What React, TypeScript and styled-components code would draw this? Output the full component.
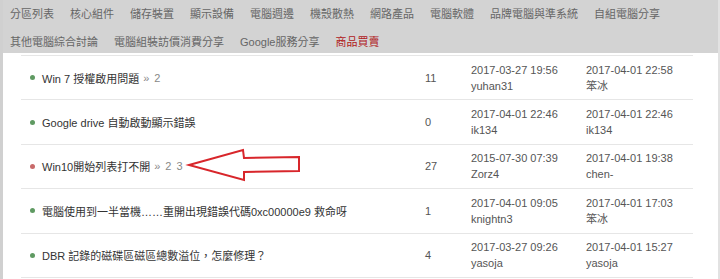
import React from 'react';
import styled, {createGlobalStyle} from 'styled-components';

const GlobalStyle = createGlobalStyle`
  html, body {
    margin: 0;
    padding: 0;
    background: #ffffff;
  }
  body {
    font-family: "Liberation Sans", "Noto Sans CJK TC", sans-serif;
    font-size: 11px;
  }
`;

const Page = styled.div`
  width: 720px;
  height: 279px;
  box-sizing: border-box;
  border-left: 3px solid #d0d0d0;
  border-right: 2px solid #e2e2e2;
  position: relative;
  overflow: hidden;
`;

const Nav = styled.nav`
  background: #d3d3d3;
  height: 53px;
  box-sizing: border-box;
  padding: 4px 0 0 7px;
  display: flex;
  flex-wrap: wrap;
  column-gap: 16px;
  row-gap: 8px;
  align-content: flex-start;
`;

const NavLink = styled.a<{$hot?: boolean}>`
  line-height: 20px;
  font-size: 11px;
  color: ${(p) => (p.$hot ? '#b0201c' : '#666666')};
  text-decoration: none;
  white-space: nowrap;
`;

const Table = styled.div`
  margin: 2px 0 0 18px;
  width: 672px;
`;

const Row = styled.div`
  display: grid;
  grid-template-columns: 404px 46px 115px 107px;
  align-items: center;
  height: 44.4px;
  box-sizing: border-box;
  border-top: 1px solid #e6e6e6;
  color: #444444;
`;

const Title = styled.div`
  display: flex;
  align-items: center;
  padding-left: 9px;
  color: #333333;
  white-space: nowrap;
`;

const Dot = styled.span<{$hot?: boolean}>`
  width: 5px;
  height: 5px;
  border-radius: 50%;
  background: ${(p) => (p.$hot ? '#c86a6a' : '#5f9a62')};
  margin-right: 7px;
  flex: none;
`;

const Pages = styled.span`
  color: #888888;
  margin-left: 4px;
  word-spacing: 2px;
`;

const Count = styled.div`
  color: #555555;
`;

const Stamp = styled.div`
  color: #555555;
  line-height: 16px;
`;

const Arrow = styled.svg`
  position: absolute;
  left: 180px;
  top: 145px;
`;

const sections = [
  '分區列表',
  '核心組件',
  '儲存裝置',
  '顯示設備',
  '電腦週邊',
  '機殼散熱',
  '網路產品',
  '電腦軟體',
  '品牌電腦與準系統',
  '自組電腦分享',
  '其他電腦綜合討論',
  '電腦組裝訪價消費分享',
  'Google服務分享',
];

type Topic = {
  title: string;
  pages?: string;
  hot?: boolean;
  replies: string;
  start: [string, string];
  last: [string, string];
};

const topics: Topic[] = [
  {title: 'Win 7 授權啟用問題', pages: '» 2', replies: '11', start: ['2017-03-27 19:56', 'yuhan31'], last: ['2017-04-01 22:58', '笨冰']},
  {title: 'Google drive 自動啟動顯示錯誤', replies: '0', start: ['2017-04-01 22:46', 'ik134'], last: ['2017-04-01 22:46', 'ik134']},
  {title: 'Win10開始列表打不開', pages: '» 2 3', hot: true, replies: '27', start: ['2015-07-30 07:39', 'Zorz4'], last: ['2017-04-01 19:38', 'chen-']},
  {title: '電腦使用到一半當機……重開出現錯誤代碼0xc00000e9 救命呀', replies: '1', start: ['2017-04-01 09:05', 'knightn3'], last: ['2017-04-01 17:03', '笨冰']},
  {title: 'DBR 記錄的磁碟區磁區總數溢位，怎麼修理？', replies: '4', start: ['2017-03-27 09:26', 'yasoja'], last: ['2017-04-01 15:27', 'yasoja']},
];

export default function App() {
  return (
    <>
      <GlobalStyle />
      <Page>
        <Nav>
          {sections.map((s) => (
            <NavLink key={s}>{s}</NavLink>
          ))}
          <NavLink $hot>商品買賣</NavLink>
        </Nav>
        <Table>
          {topics.map((t) => (
            <Row key={t.title}>
              <Title>
                <Dot $hot={t.hot} />
                {t.title}
                {t.pages && <Pages>{t.pages}</Pages>}
              </Title>
              <Count>{t.replies}</Count>
              <Stamp>
                {t.start[0]}
                <br />
                {t.start[1]}
              </Stamp>
              <Stamp>
                {t.last[0]}
                <br />
                {t.last[1]}
              </Stamp>
            </Row>
          ))}
          <Row />
        </Table>
        <Arrow width="122" height="40" viewBox="0 0 122 40">
          <polygon
            points="6,20 60,5 61,13 116,12 116,26 61,27 61,35"
            fill="none"
            stroke="#d8262b"
            strokeWidth="2"
            strokeLinejoin="miter"
          />
        </Arrow>
      </Page>
    </>
  );
}
